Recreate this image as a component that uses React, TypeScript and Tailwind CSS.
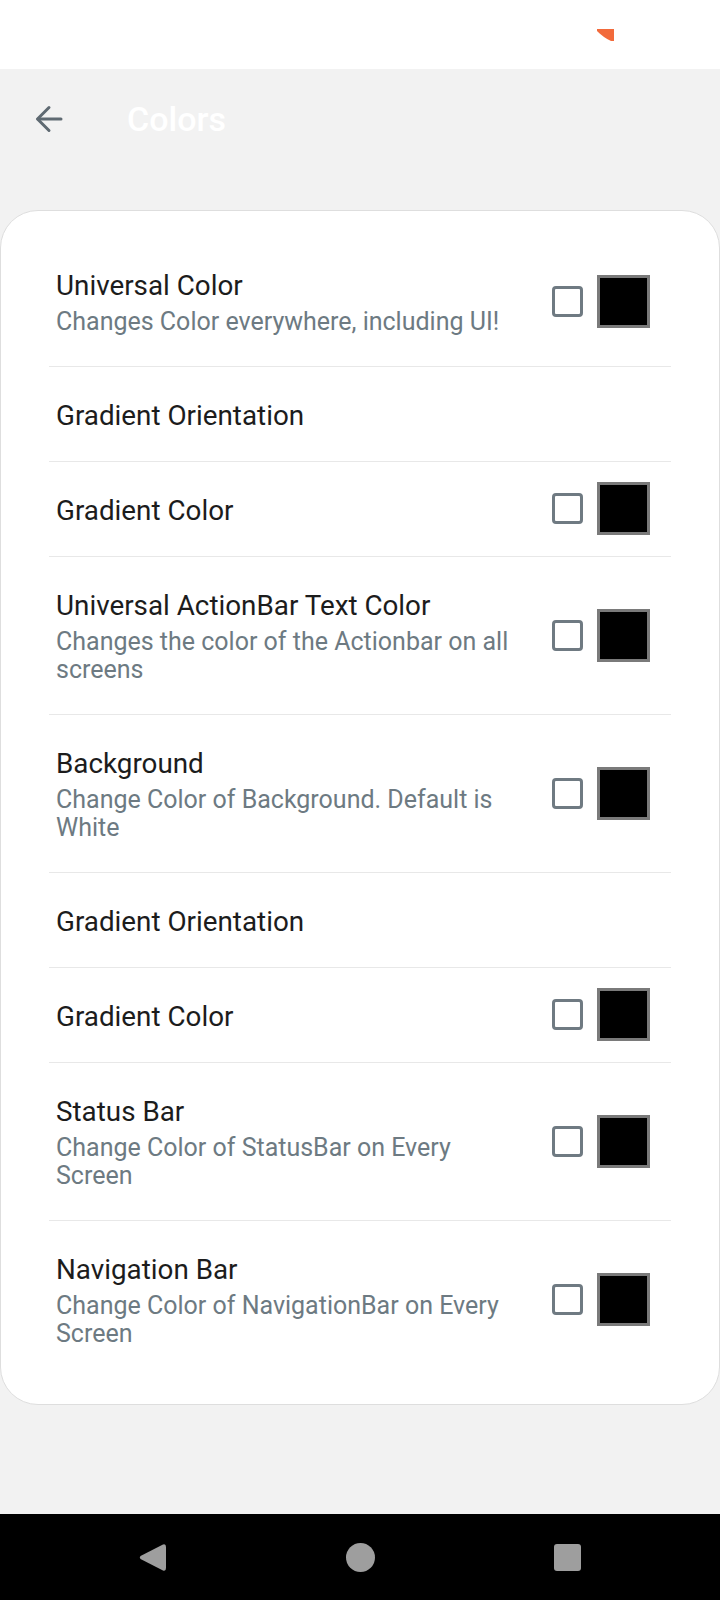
import React from "react";

type Row = {
  title: string;
  sub?: string;
  picker?: boolean;
};

const ROWS: Row[] = [
  { title: "Universal Color", sub: "Changes Color everywhere, including UI!", picker: true },
  { title: "Gradient Orientation" },
  { title: "Gradient Color", picker: true },
  { title: "Universal ActionBar Text Color", sub: "Changes the color of the Actionbar on all screens", picker: true },
  { title: "Background", sub: "Change Color of Background. Default is White", picker: true },
  { title: "Gradient Orientation" },
  { title: "Gradient Color", picker: true },
  { title: "Status Bar", sub: "Change Color of StatusBar on Every Screen", picker: true },
  { title: "Navigation Bar", sub: "Change Color of NavigationBar on Every Screen", picker: true },
];

function ColorRow({ row, last }: { row: Row; last: boolean }) {
  return (
    <div
      className={
        "flex items-center pl-[7px] pr-[21px] " +
        (last ? "" : "border-b border-[#e8e8e8]")
      }
    >
      <div className="flex-1 min-w-0 pt-[33px] pb-[29px] pr-[34px]">
        <p className="text-[27.8px] leading-[32px] text-[#1c1c1c]">{row.title}</p>
        {row.sub && (
          <p className="mt-[6px] text-[25px] leading-[28.5px] text-[#6d7a82]">{row.sub}</p>
        )}
      </div>
      {row.picker && (
        <div className="flex items-center gap-[14px] shrink-0">
          <div className="w-[31px] h-[31px] rounded-[4px] border-[3px] border-[#6f7a82] bg-white" />
          <div className="w-[53px] h-[53px] bg-black border-[3px] border-[#7a7a7a]" />
        </div>
      )}
    </div>
  );
}

export default function App() {
  return (
    <div className="w-[720px] h-[1600px] flex flex-col bg-[#f2f2f2] font-['Roboto','Liberation_Sans',sans-serif]">
      {/* status bar */}
      <div className="h-[69px] bg-white pl-[597px] pt-[29px] shrink-0">
        <svg width="17" height="12" viewBox="0 0 17 12">
          <path d="M0 0 H17 V12 H14 Q7 9 0 2 Z" fill="#f26a3b" />
        </svg>
      </div>

      {/* toolbar */}
      <div className="h-[100px] flex items-center pl-[35px] shrink-0">
        <svg width="28" height="28" viewBox="0 0 28 28" fill="none" stroke="#5f6a72" strokeWidth={3} strokeLinecap="round" strokeLinejoin="round">
          <path d="M26 14 H3" />
          <path d="M14 2.5 L2.5 14 L14 25.5" />
        </svg>
        <span className="ml-[64px] text-[34px] font-medium leading-none text-white">Colors</span>
      </div>
      <div className="h-[41px] shrink-0" />

      {/* settings card */}
      <div className="bg-white border border-[#dedede] rounded-[38px] pt-[26px] pb-[26px] px-[48px] shrink-0">
        {ROWS.map((row, i) => (
          <ColorRow key={i} row={row} last={i === ROWS.length - 1} />
        ))}
      </div>

      <div className="flex-1" />

      {/* navigation bar */}
      <div className="h-[86px] bg-black flex items-center pl-[139px] shrink-0">
        <svg width="27" height="29" viewBox="0 0 27 29">
          <path d="M24 1.5 Q27 0.5 27 4 V25 Q27 28.5 24 27.5 L1.5 16 Q0 14.5 1.5 13 Z" fill="#9e9e9e" />
        </svg>
        <div className="ml-[180px] w-[29px] h-[29px] rounded-full bg-[#9e9e9e]" />
        <div className="ml-[179px] w-[27px] h-[27px] rounded-[3px] bg-[#9e9e9e]" />
      </div>
    </div>
  );
}
